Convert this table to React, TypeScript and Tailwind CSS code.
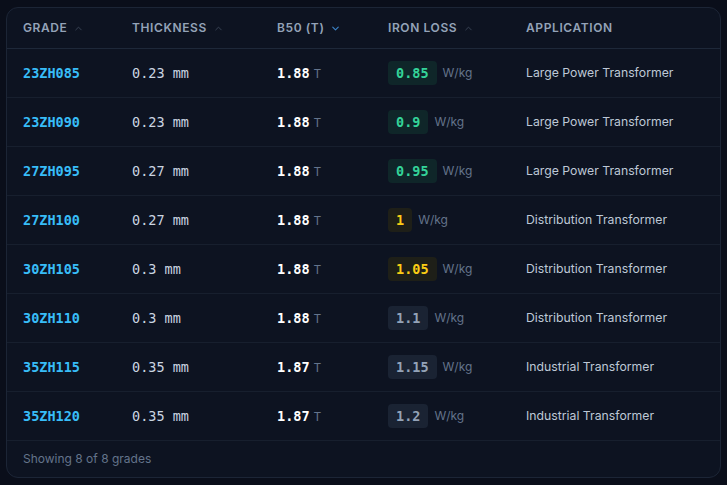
import { ChevronDown, ChevronUp } from "lucide-react";

type Grade = {
  grade: string;
  thickness: number;
  b50: number;
  loss: number;
  application: string;
};

const grades: Grade[] = [
  { grade: "23ZH085", thickness: 0.23, b50: 1.88, loss: 0.85, application: "Large Power Transformer" },
  { grade: "23ZH090", thickness: 0.23, b50: 1.88, loss: 0.9, application: "Large Power Transformer" },
  { grade: "27ZH095", thickness: 0.27, b50: 1.88, loss: 0.95, application: "Large Power Transformer" },
  { grade: "27ZH100", thickness: 0.27, b50: 1.88, loss: 1, application: "Distribution Transformer" },
  { grade: "30ZH105", thickness: 0.3, b50: 1.88, loss: 1.05, application: "Distribution Transformer" },
  { grade: "30ZH110", thickness: 0.3, b50: 1.88, loss: 1.1, application: "Distribution Transformer" },
  { grade: "35ZH115", thickness: 0.35, b50: 1.87, loss: 1.15, application: "Industrial Transformer" },
  { grade: "35ZH120", thickness: 0.35, b50: 1.87, loss: 1.2, application: "Industrial Transformer" },
];

const cols = "grid grid-cols-[109px_145px_111px_138px_1fr]";
const mono = "font-['DejaVu_Sans_Mono',monospace]";

const lossStyle = (v: number) => {
  if (v < 1) return "bg-[#0f2629] text-[#34d399]";
  if (v < 1.1) return "bg-[#1e1f18] text-[#facc15]";
  return "bg-[#1a2333] text-[#94a3b8]";
};

const Head = ({ label, sort }: { label: string; sort?: "up" | "down" }) => (
  <div className="flex items-center gap-1.5 px-4 py-3 text-xs font-semibold uppercase tracking-wider text-[#94a3b8]">
    <span>{label}</span>
    {sort === "up" && <ChevronUp size={11} strokeWidth={2} className="text-[#3b4658]" />}
    {sort === "down" && <ChevronDown size={11} strokeWidth={2.5} className="text-[#3b82c6]" />}
  </div>
);

const App = () => {
  return (
    <div className="min-h-screen bg-[#0a0e1a] px-1.5 pt-[7px] font-['Inter',sans-serif]">
      <div className="overflow-hidden rounded-xl border border-[#1c2536] bg-[#0d1321]">
        <div className={`${cols} border-b border-[#1e2839]`}>
          <Head label="Grade" sort="up" />
          <Head label="Thickness" sort="up" />
          <Head label="B50 (T)" sort="down" />
          <Head label="Iron Loss" sort="up" />
          <Head label="Application" />
        </div>
        {grades.map((g) => (
          <div key={g.grade} className={`${cols} h-[49px] items-center border-b border-[#171f2e]`}>
            <div className={`px-4 text-[13.5px] font-bold text-[#38bdf8] ${mono}`}>{g.grade}</div>
            <div className={`px-4 text-[13.5px] text-[#cbd5e1] ${mono}`}>{g.thickness} mm</div>
            <div className="flex items-baseline gap-1 px-4">
              <span className={`text-[13.5px] font-bold text-white ${mono}`}>{g.b50}</span>
              <span className="text-xs text-[#64748b]">T</span>
            </div>
            <div className="flex items-center gap-1.5 px-4">
              <span className={`rounded px-2 py-0.5 text-[13.5px] font-bold leading-5 ${mono} ${lossStyle(g.loss)}`}>
                {g.loss}
              </span>
              <span className="text-xs text-[#64748b]">W/kg</span>
            </div>
            <div className="px-4 text-[12.25px] text-[#bec8d6]">{g.application}</div>
          </div>
        ))}
        <div className="px-4 py-2.5 text-xs text-[#64748b]">Showing 8 of 8 grades</div>
      </div>
    </div>
  );
};

export default App;
